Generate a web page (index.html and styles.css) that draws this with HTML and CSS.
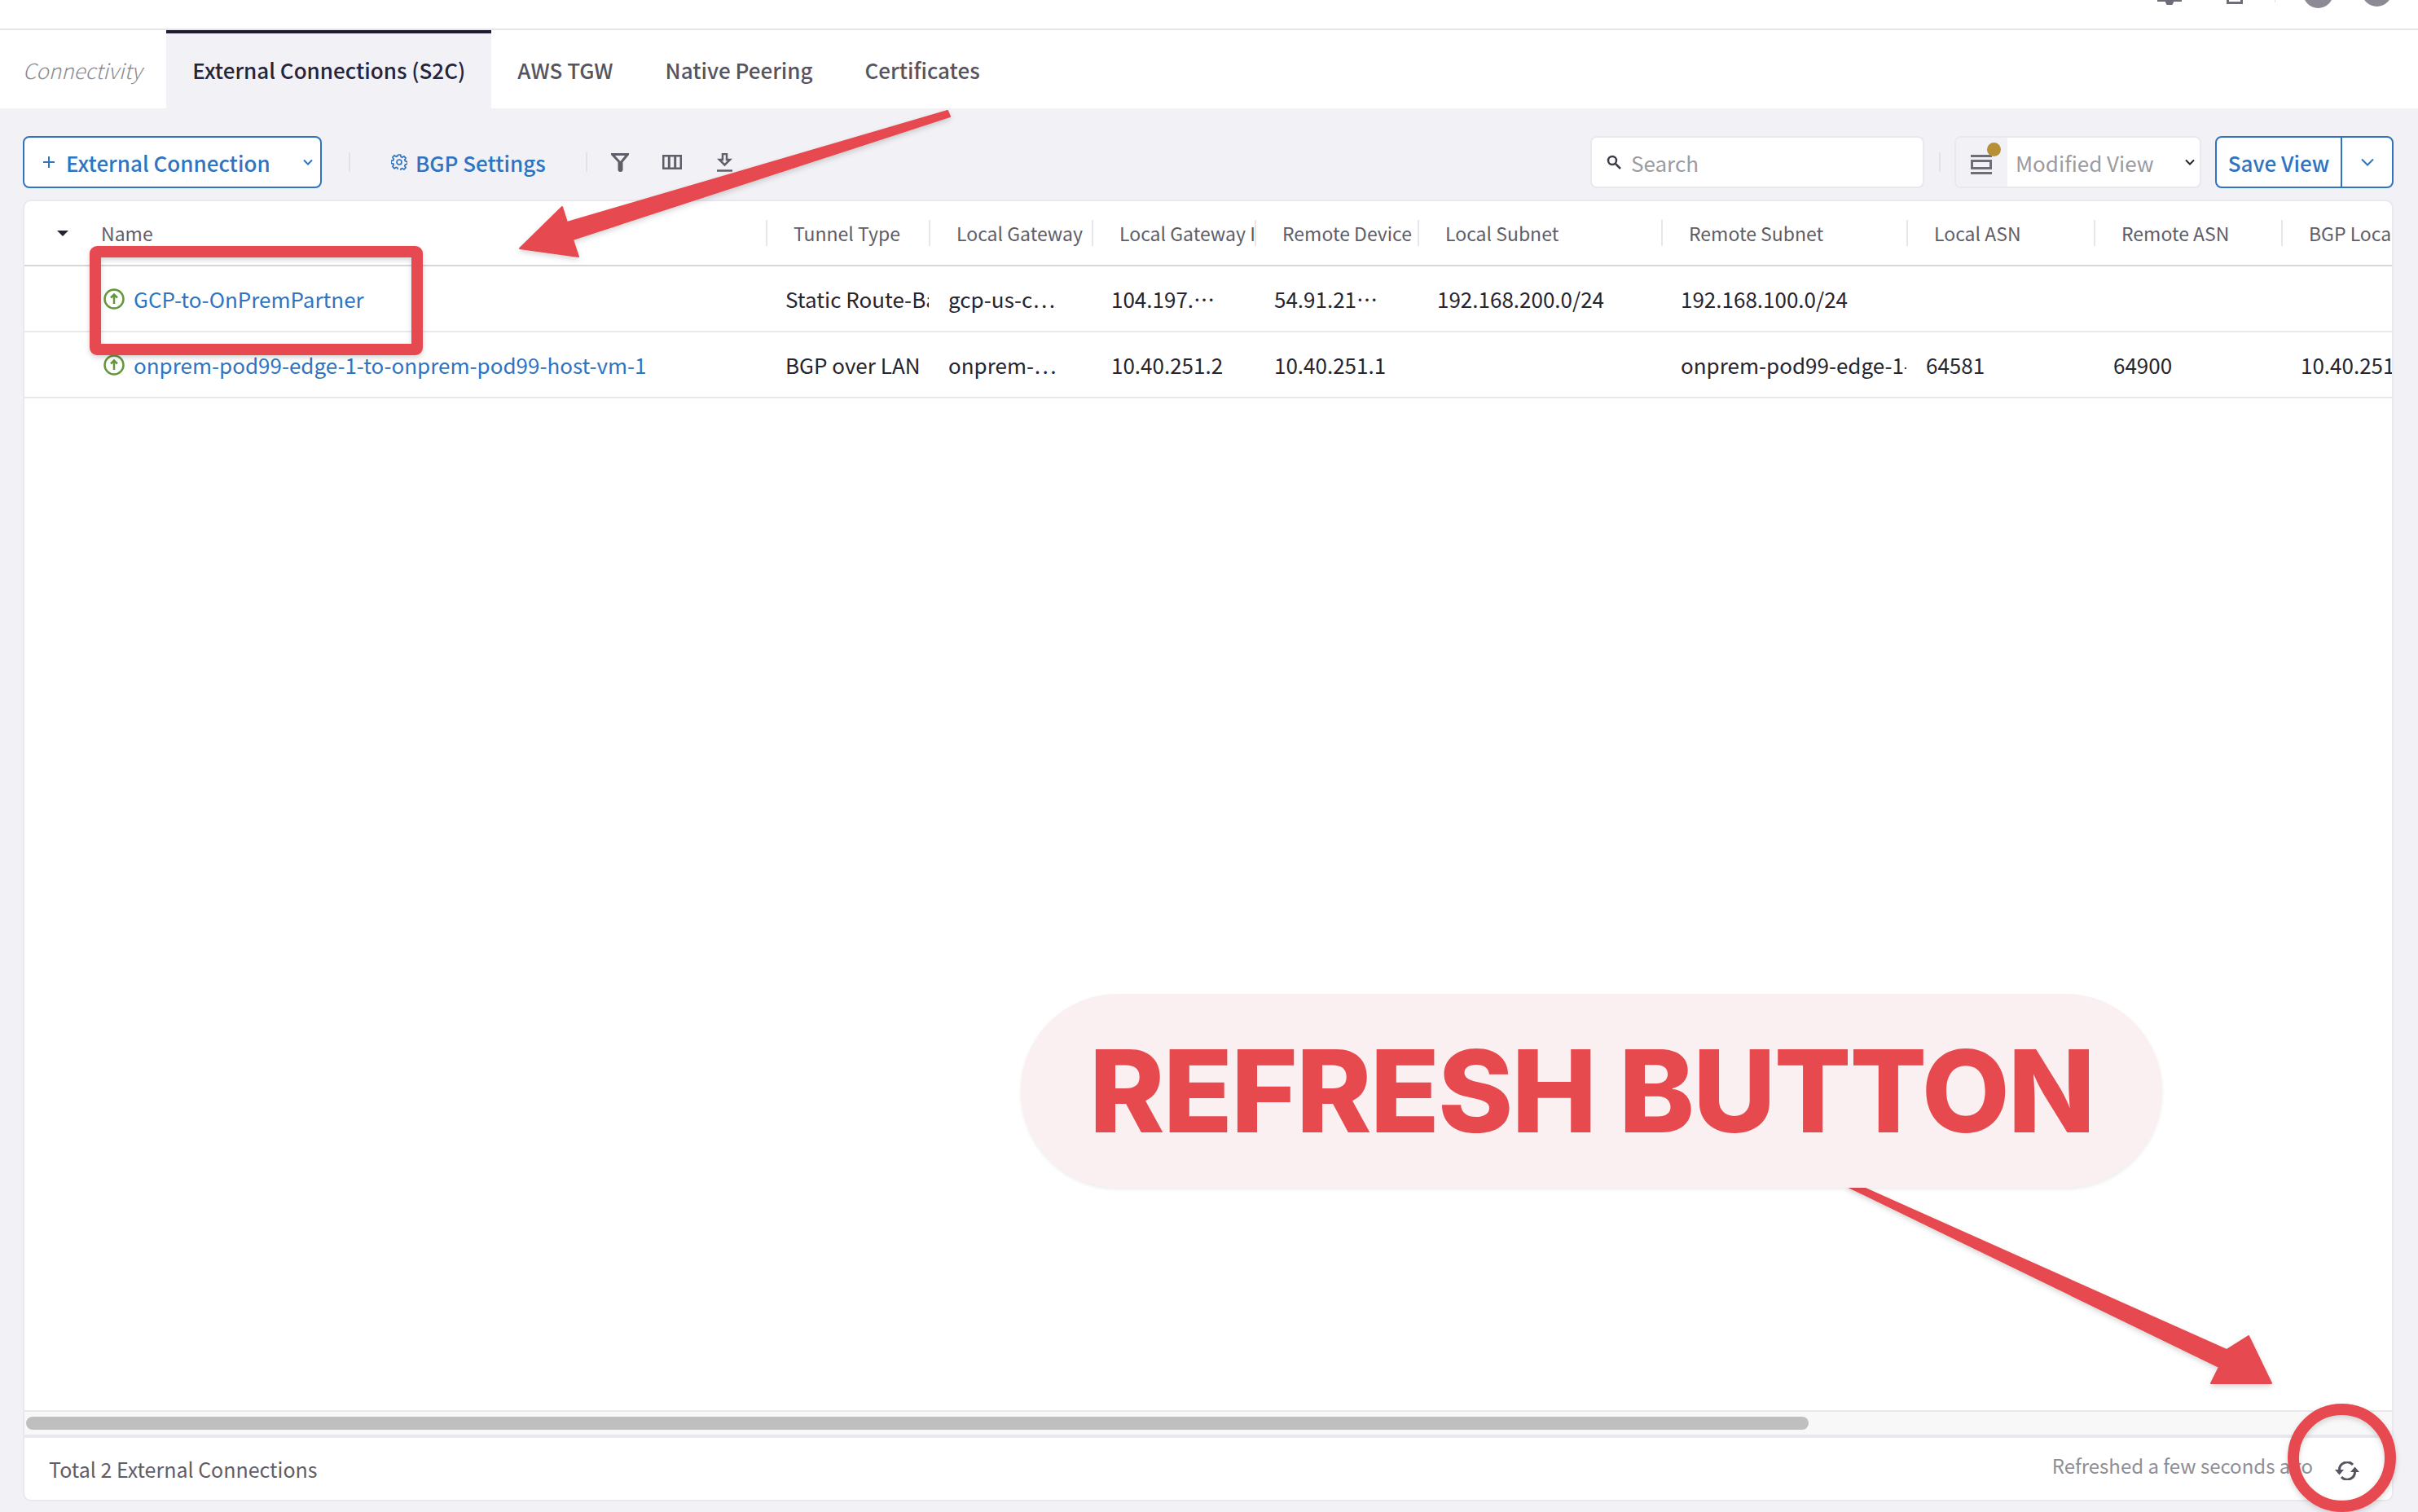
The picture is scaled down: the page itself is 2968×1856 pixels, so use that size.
FILE: index.html
```html
<!DOCTYPE html>
<html lang="en">
<head>
<meta charset="utf-8">
<title>External Connections</title>
<link rel="stylesheet" href="styles.css">
</head>
<body>
<div class="page">
  <header class="topbar">
    <svg class="top-icon bell" viewBox="0 0 30 6"><path d="M0 0h30v2H0z"/><path d="M10 2h10a5 5 0 0 1-10 0z"/></svg>
    <svg class="top-icon doc" viewBox="0 0 20 5"><path d="M0 0h3v2h14V0h3v5H0z"/></svg>
    <span class="top-sep"></span>
    <span class="avatar a1"></span>
    <span class="avatar a2"></span>
  </header>
  <nav class="tabs">
    <a class="tab first">Connectivity</a>
    <a class="tab active">External Connections (S2C)</a>
    <a class="tab">AWS TGW</a>
    <a class="tab">Native Peering</a>
    <a class="tab">Certificates</a>
  </nav>
  <main class="content">
    <div class="toolbar">
      <button class="btn add">
        <svg class="plus" viewBox="0 0 14 14"><path d="M7 0v14M0 7h14"/></svg>
        <span>External Connection</span>
        <svg class="chev add-chev" viewBox="0 0 12 8"><path d="M1 1.5l5 5 5-5"/></svg>
      </button>
      <span class="vsep sep1"></span>
      <span class="link-btn">
        <svg class="gear" viewBox="0 0 20 20"><path d="M8.4 1h3.2l.5 2.5 1.6.7 2.2-1.4 2.2 2.3-1.4 2.1.7 1.6 2.5.5v3.2l-2.5.5-.7 1.6 1.4 2.1-2.2 2.3-2.2-1.4-1.6.7-.5 2.5H8.4"/><path d="M8.4 19l-.5-1.9-1.6-.7-2.2 1.4-2.2-2.3 1.4-2.1-.7-1.6L.1 11.600V8.400l2.500-.5.7-1.600-1.400-2.100 2.200-2.300 2.200 1.400 1.600-.7.500-1.600"/><circle cx="10" cy="10" r="3"/></svg>
        BGP Settings
      </span>
      <span class="vsep sep2"></span>
      <svg class="tool filter" viewBox="0 0 22 23"><path d="M1.500 1.500h19l-7.500 9v9.500a1.500 1.500 0 0 1-3 0v-9.500z"/></svg>
      <svg class="tool cols" viewBox="0 0 24 18"><path d="M1 1h22v16H1zM8.300 1v16M15.700 1v16"/></svg>
      <svg class="tool dl" viewBox="0 0 19 23"><path d="M7 1h5v7h4l-6.500 6.500L3 8h4z"/><path d="M0 21.500h19"/></svg>
      <span class="spacer"></span>
      <label class="search">
        <svg class="search-ic" viewBox="0 0 18 18"><circle cx="7" cy="7" r="5"/><path d="M11 11l6 6"/></svg>
        <span>Search</span>
      </label>
      <span class="vsep sep3"></span>
      <div class="view-select">
        <span class="view-ic">
          <svg viewBox="0 0 26 24"><path d="M0 1.500h26M0 22.500h26"/><path d="M1.500 7.500h23v9h-23z"/></svg>
          <i class="dot"></i>
        </span>
        <span class="view-name">Modified View</span>
        <svg class="chev view-chev" viewBox="0 0 12 8"><path d="M1 1.500l5 5 5-5"/></svg>
      </div>
      <div class="btn save">
        <span class="save-main">Save View</span>
        <span class="save-more"><svg class="chev save-chev" viewBox="0 0 16 10"><path d="M1 1.500l7 7 7-7"/></svg></span>
      </div>
    </div>

    <section class="card">
      <div class="thead row-grid">
        <span class="th-sort"><i class="caret"></i></span>
        <span class="th th-name">Name</span>
        <span class="th">Tunnel Type</span>
        <span class="th">Local Gateway</span>
        <span class="th">Local Gateway II</span>
        <span class="th">Remote Device I</span>
        <span class="th">Local Subnet</span>
        <span class="th">Remote Subnet</span>
        <span class="th">Local ASN</span>
        <span class="th">Remote ASN</span>
        <span class="th">BGP Local</span>
      </div>
      <div class="tr row-grid">
        <span></span>
        <span class="td td-name">
          <svg class="status" viewBox="0 0 26 26"><circle cx="13" cy="13" r="11.500"/><path d="M13 19V8M9 11.500L13 7.500l4 4"/></svg>
          <a>GCP-to-OnPremPartner</a>
        </span>
        <span class="td">Static Route-Based</span>
        <span class="td">gcp-us-c…</span>
        <span class="td">104.197.…</span>
        <span class="td">54.91.21…</span>
        <span class="td">192.168.200.0/24</span>
        <span class="td">192.168.100.0/24</span>
        <span class="td"></span>
        <span class="td"></span>
        <span class="td"></span>
      </div>
      <div class="tr row-grid">
        <span></span>
        <span class="td td-name">
          <svg class="status" viewBox="0 0 26 26"><circle cx="13" cy="13" r="11.500"/><path d="M13 19V8M9 11.500L13 7.500l4 4"/></svg>
          <a>onprem-pod99-edge-1-to-onprem-pod99-host-vm-1</a>
        </span>
        <span class="td">BGP over LAN</span>
        <span class="td">onprem-…</span>
        <span class="td">10.40.251.2</span>
        <span class="td">10.40.251.1</span>
        <span class="td"></span>
        <span class="td">onprem-pod99-edge-1-to-onprem</span>
        <span class="td">64581</span>
        <span class="td">64900</span>
        <span class="td">10.40.251.1</span>
      </div>
      <div class="tbody-fill"></div>
      <div class="hscroll"><span class="thumb"></span></div>
      <footer class="card-foot">
        <span class="total">Total 2 External Connections</span>
        <span class="refreshed">Refreshed a few seconds ago</span>
        <svg class="refresh" viewBox="0 0 30 23"><path d="M5.500 11a9.500 9.500 0 0 1 16.500-7"/><path d="M24.500 12a9.500 9.500 0 0 1-16.500 7"/><path d="M0 10h11l-5.500 6.500zM19 13h11l-5.500-6.500z" class="fill"/></svg>
      </footer>
    </section>
  </main>

  <svg class="marks" viewBox="0 0 2968 1856">
    <defs>
      <filter id="soft" x="-5%" y="-5%" width="110%" height="115%"><feDropShadow dx="0" dy="3" stdDeviation="3" flood-color="#000" flood-opacity=".16"/></filter>
    </defs>
    <g class="mark" filter="url(#soft)">
      <rect class="box" x="117" y="309" width="395" height="120" rx="2"/>
      <path d="M1163 136L1166 143L703 294L710 315L638 305L690 254L696 273Z"/>
    </g>
    <g class="mark" filter="url(#soft)">
      <path d="M2272 1451L2269 1457L2724 1678L2714 1698L2788 1698L2760 1640L2733 1657Z"/>
      <circle class="ring" cx="2874.500" cy="1789.500" r="59.500"/>
    </g>
  </svg>
  <div class="callout">REFRESH BUTTON</div>
</div>
</body>
</html>
```
FILE: styles.css
```css
* { box-sizing: border-box; }
html, body { margin: 0; height: 100%; overflow: hidden; }
body {
  font-family: "Noto Sans CJK SC", "Source Sans 3", "Noto Sans", sans-serif;
  color: #26252f;
  background: #f1f1f6;
}
.page { position: relative; width: 2968px; height: 1856px; display: flex; flex-direction: column; overflow: hidden; }

/* top bar, mostly cropped off */
.topbar { height: 37px; flex: none; background: #fff; border-bottom: 2px solid #e5e5ea; display: flex; align-items: flex-start; padding-right: 32px; justify-content: flex-end; overflow: hidden; }
.top-icon { fill: #6e6c78; display: block; }
.bell { width: 30px; height: 6px; margin-right: 55px; }
.doc { width: 20px; height: 5px; margin-right: 39px; }
.top-sep { width: 1px; height: 3px; background: #ddd; margin-right: 34px; }
.avatar { width: 37px; height: 37px; border-radius: 50%; background: #8d8a95; }
.a1 { margin-top: -27px; margin-right: 35px; }
.a2 { margin-top: -29px; }

/* tabs */
.tabs { height: 96px; flex: none; background: #fff; display: flex; }
.tab { padding: 0 32px; display: flex; align-items: center; font-size: 26px; font-weight: 500; color: #55545f; border-top: 4px solid transparent; padding-bottom: 4px; }
.tab.first { padding-left: 28px; padding-right: 30px; font-style: italic; font-weight: 300; color: #8b8b91; }
.tab.active { background: #f1f1f6; color: #26243a; border-top-color: #1f1d33; }

/* toolbar */
.content { flex: 1; min-height: 0; display: flex; flex-direction: column; padding: 34px 30px 13px 28px; }
.toolbar { height: 64px; flex: none; display: flex; align-items: center; margin-bottom: 14px; }
.btn { height: 64px; border: 2px solid #2f74c0; border-radius: 8px; background: #fff; color: #2f74c0; font: inherit; font-size: 26px; font-weight: 500; display: flex; align-items: center; padding: 0; }
.add { width: 367px; padding-left: 23px; }
.plus { width: 14px; height: 14px; stroke: #2f74c0; stroke-width: 2; fill: none; margin-right: 14px; }
.chev { fill: none; stroke-width: 2; }
.add-chev { width: 12px; height: 8px; stroke: #2f74c0; margin-left: 40px; }
.vsep { width: 2px; height: 24px; background: #e2e2e8; flex: none; }
.sep1 { margin-left: 33px; }
.link-btn { display: flex; align-items: center; color: #2f74c0; font-size: 26px; font-weight: 500; margin-left: 50px; white-space: nowrap; }
.gear { width: 20px; height: 20px; fill: none; stroke: #2f74c0; stroke-width: 1.700; margin-right: 10px; }
.sep2 { margin-left: 49px; }
.tool { flex: none; fill: none; stroke: #605f69; stroke-width: 3; }
.filter { width: 22px; height: 23px; margin-left: 29px; }
.cols { width: 24px; height: 18px; margin-left: 41px; }
.dl { width: 19px; height: 23px; margin-left: 43px; stroke-width: 2.500; }
.spacer { flex: 1; }
.search { width: 410px; height: 64px; background: #fff; border: 2px solid #e8e8ee; border-radius: 8px; display: flex; align-items: center; padding-left: 18px; color: #9b9ba1; font-size: 26px; }
.search-ic { width: 18px; height: 18px; fill: none; stroke: #3d3c46; stroke-width: 2.500; margin-right: 12px; }
.sep3 { margin-left: 18px; }
.view-select { margin-left: 17px; width: 303px; height: 64px; border: 2px solid #e8e8ee; border-radius: 8px; background: #fff; display: flex; align-items: center; overflow: hidden; }
.view-ic { width: 63px; height: 100%; background: #f1f1f6; position: relative; display: flex; align-items: center; padding-left: 18px; flex: none; }
.view-ic svg { width: 26px; height: 24px; fill: none; stroke: #6f6e78; stroke-width: 3; margin-top: 6px; }
.dot { position: absolute; left: 38px; top: 6px; width: 17px; height: 17px; border-radius: 50%; background: #b59035; }
.view-name { margin-left: 10px; color: #9b9ba1; font-size: 26px; white-space: nowrap; }
.view-chev { width: 12px; height: 8px; stroke: #26252f; margin-left: 38px; }
.save { margin-left: 17px; width: 219px; flex: none; }
.save-main { width: 154px; height: 100%; display: flex; align-items: center; justify-content: center; border-right: 2px solid #2f74c0; }
.save-more { flex: 1; display: flex; align-items: center; justify-content: center; }
.save-chev { width: 16px; height: 10px; stroke: #2f74c0; }

/* table card */
.card { flex: 1; min-height: 0; background: #fff; border: 2px solid #e8e8ee; border-radius: 10px; display: flex; flex-direction: column; overflow: hidden; }
.row-grid { display: grid; grid-template-columns: 94px 816px 200px 200px 200px 200px 299px 301px 230px 230px 138px; flex: none; }
.thead { height: 80px; border-bottom: 2px solid #d6d6db; padding-top: 23px; align-items: start; }
.th { height: 32px; padding-left: 32px; border-left: 2px solid #e6e6eb; font-size: 23px; line-height: 32px; color: #5f5e68; white-space: nowrap; overflow: hidden; }
.th-name { border-left: none; padding-left: 0; }
.th-sort { height: 32px; display: flex; align-items: center; padding-left: 40px; }
.caret { width: 0; height: 0; border-left: 7px solid transparent; border-right: 7px solid transparent; border-top: 7px solid #26252f; }
.tr { height: 81px; border-bottom: 2px solid #e8e8ee; align-items: center; font-size: 26px; }
.tr:nth-of-type(3) { height: 81px; }
.td { padding-left: 24px; white-space: nowrap; overflow: hidden; line-height: 36px; padding-right: 6px; }
.td-name { padding: 0; display: flex; align-items: center; }
.td-name a { color: #2f74c0; }
.status { width: 26px; height: 26px; margin-left: 3px; margin-right: 11px; fill: none; stroke: #64983c; stroke-width: 2.500; flex: none; }
.tbody-fill { flex: 1; min-height: 0; }
.hscroll { height: 30px; flex: none; background: #f8f8f9; border-top: 2px solid #e8e8ee; padding: 6px 0 0 2px; }
.thumb { display: block; width: 2188px; height: 16px; border-radius: 8px; background: #bfbfbf; }
.card-foot { height: 80px; flex: none; border-top: 4px solid #e8e8ee; display: flex; align-items: center; padding-left: 30px; padding-right: 40px; }
.total { font-size: 25px; color: #5f5e68; }
.refreshed { margin-left: auto; font-size: 24px; color: #8e8e96; margin-top: -10px; }
.refresh { width: 30px; height: 23px; margin-left: 27px; fill: none; stroke: #55545f; stroke-width: 3; margin-top: 4px; }
.refresh .fill { fill: #55545f; stroke: none; }

/* annotations drawn over the screenshot */
.marks { position: absolute; left: 0; top: 0; width: 2968px; height: 1856px; pointer-events: none; }
.mark { fill: #e64a4f; stroke: #e64a4f; stroke-width: 2; stroke-linejoin: round; }
.box, .ring { fill: none; stroke-width: 14; }
.callout { position: absolute; left: 1253px; top: 1220px; width: 1401px; height: 238px; border-radius: 119px; background: #fbf0f1; box-shadow: 0 2px 4px rgba(0,0,0,.08); display: flex; align-items: center; justify-content: center; font-family: Inter, "Noto Sans", sans-serif; font-weight: 800; font-size: 140px; line-height: 1; color: #e64a4f; white-space: nowrap; letter-spacing: -2px; }
```
